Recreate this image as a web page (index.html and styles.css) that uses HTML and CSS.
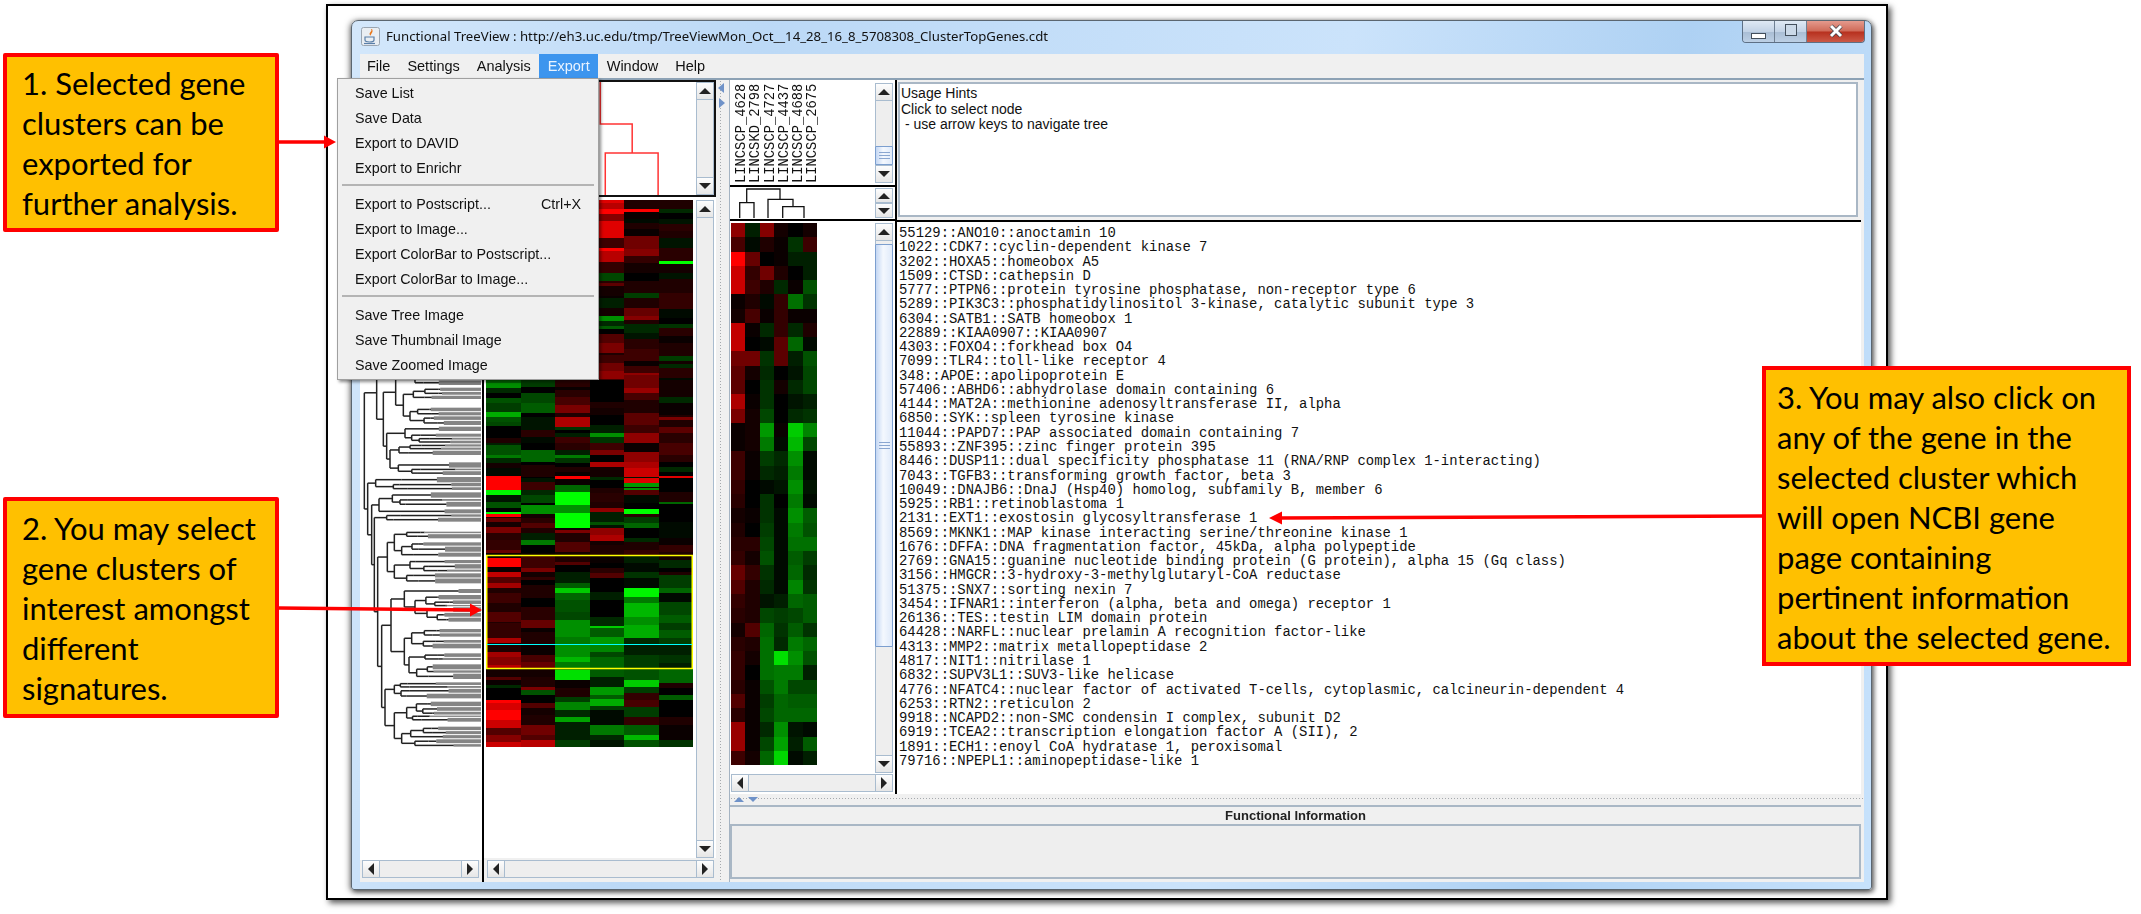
FILE: index.html
```html
<!DOCTYPE html>
<html lang="en">
<head>
<meta charset="utf-8">
<title>Functional TreeView</title>
<link rel="stylesheet" href="styles.css">
</head>
<body>
<div class="frame">
  <div class="window">
    <div class="titlebar">
      <svg class="java" viewBox="0 0 19 19"><rect x=".5" y=".5" width="18" height="18" rx="2" fill="#e9eef3" stroke="#9aa5b1"/><path d="M10 2c2 2-3 4-1 6 .5.6 1 .8 1 .8-1-2 3-3 1-6.800z" fill="#e8761a"/><path d="M4 10h9v3c0 1.500-1.500 2-4.500 2S4 14.500 4 13z" fill="none" stroke="#5a7fa8" stroke-width="1.200"/><path d="M3 16.500h11" stroke="#5a7fa8" stroke-width="1.200"/></svg>
      <span class="title">Functional TreeView : http://eh3.uc.edu/tmp/TreeViewMon_Oct__14_28_16_8_5708308_ClusterTopGenes.cdt</span>
      <div class="controls">
        <div class="ctl"><span class="min-ico"></span></div>
        <div class="ctl"><span class="max-ico"></span></div>
        <div class="ctl close"><svg viewBox="0 0 14 14" class="x-ico"><path d="M2 2l10 10M12 2L2 12" stroke="#39404a" stroke-width="4.400"/><path d="M2 2l10 10M12 2L2 12" stroke="#fff" stroke-width="3"/></svg></div>
      </div>
    </div>
    <div class="client">
      <div class="menubar">
        <span class="mi">File</span><span class="mi">Settings</span><span class="mi">Analysis</span><span class="mi active">Export</span><span class="mi">Window</span><span class="mi">Help</span>
        <div class="popup">
          <div class="pi">Save List</div>
          <div class="pi">Save Data</div>
          <div class="pi">Export to DAVID</div>
          <div class="pi">Export to Enrichr</div>
          <div class="psep"></div>
          <div class="pi">Export to Postscript...<span class="short">Ctrl+X</span></div>
          <div class="pi">Export to Image...</div>
          <div class="pi">Export ColorBar to Postscript...</div>
          <div class="pi">Export ColorBar to Image...</div>
          <div class="psep"></div>
          <div class="pi">Save Tree Image</div>
          <div class="pi">Save Thumbnail Image</div>
          <div class="pi">Save Zoomed Image</div>
        </div>
      </div>
      <div class="panes">
        <div class="left">
          <div class="thumb">
            <svg class="thumb-tree" viewBox="360 82 337 113" preserveAspectRatio="none"><path d="M601 82V124H633V153M606 195V153H659V195" fill="none" stroke="#f33" stroke-width="1.500"/></svg>
            <div class="vsb thumb-sb">
              <div class="sbtn"><i class="tri up"></i></div><div class="track"></div><div class="sbtn"><i class="tri down"></i></div>
            </div>
          </div>
          <div class="lower">
            <div class="tree-col">
              <canvas id="tree" class="tree-canvas" width="122" height="663"></canvas>
              <div class="hsb tree-hsb"><div class="sbtn"><i class="tri left-t"></i></div><div class="htrack"></div><div class="sbtn"><i class="tri right-t"></i></div></div>
            </div>
            <div class="heat-col">
              <div class="heat-row">
                <div class="heat-wrap"><canvas id="heat" width="207" height="547"></canvas></div>
                <div class="vsb heat-sb"><div class="sbtn"><i class="tri up"></i></div><div class="track"></div><div class="sbtn"><i class="tri down"></i></div></div>
              </div>
              <div class="hsb heat-hsb"><div class="sbtn"><i class="tri left-t"></i></div><div class="htrack"></div><div class="sbtn"><i class="tri right-t"></i></div></div>
            </div>
          </div>
        </div>
        <div class="vsplit"><i class="tri sp-l"></i><i class="tri sp-r"></i></div>
        <div class="right">
          <div class="upper">
            <div class="sub-left">
              <div class="label-row">
                <div class="labels">
                  <span class="lab">LINCSCP_4628</span><span class="lab">LINCSKD_2798</span><span class="lab">LINCSCP_4727</span><span class="lab">LINCSCP_4437</span><span class="lab">LINCSCP_4688</span><span class="lab">LINCSCP_2675</span>
                </div>
                <div class="vsb label-sb"><div class="sbtn"><i class="tri up"></i></div><div class="track"><div class="fill"></div><div class="bthumb small"><i class="grip"></i></div></div><div class="sbtn"><i class="tri down"></i></div></div>
              </div>
              <div class="mini-row">
                <svg class="mini-tree" viewBox="0 0 143 30"><path d="M8.700 30V14.700H23V30M15.700 14.700V1H49V11.300M37 30V11.300H62V18.700M51.700 30V18.700H73V30" fill="none" stroke="#111" stroke-width="1.300"/></svg>
                <div class="vsb mini-sb"><div class="sbtn short-btn"><i class="tri up"></i></div><div class="sbtn short-btn"><i class="tri down"></i></div></div>
              </div>
              <div class="small-row">
                <div class="small-top">
                  <div class="small-wrap"><canvas id="small" width="86" height="542"></canvas></div>
                  <div class="vsb small-sb"><div class="sbtn"><i class="tri up"></i></div><div class="track"><div class="bthumb long"><i class="grip"></i></div><div class="fill"></div></div><div class="sbtn"><i class="tri down"></i></div></div>
                </div>
                <div class="hsb small-hsb"><div class="sbtn"><i class="tri left-t"></i></div><div class="htrack"></div><div class="sbtn"><i class="tri right-t"></i></div></div>
              </div>
            </div>
            <div class="bar"></div>
            <div class="sub-right">
              <div class="usage">Usage Hints<br>Click to select node<br>&nbsp;- use arrow keys to navigate tree</div>
              <div class="hbar"></div>
              <div class="genes">55129::ANO10::anoctamin 10
1022::CDK7::cyclin-dependent kinase 7
3202::HOXA5::homeobox A5
1509::CTSD::cathepsin D
5777::PTPN6::protein tyrosine phosphatase, non-receptor type 6
5289::PIK3C3::phosphatidylinositol 3-kinase, catalytic subunit type 3
6304::SATB1::SATB homeobox 1
22889::KIAA0907::KIAA0907
4303::FOXO4::forkhead box O4
7099::TLR4::toll-like receptor 4
348::APOE::apolipoprotein E
57406::ABHD6::abhydrolase domain containing 6
4144::MAT2A::methionine adenosyltransferase II, alpha
6850::SYK::spleen tyrosine kinase
11044::PAPD7::PAP associated domain containing 7
55893::ZNF395::zinc finger protein 395
8446::DUSP11::dual specificity phosphatase 11 (RNA/RNP complex 1-interacting)
7043::TGFB3::transforming growth factor, beta 3
10049::DNAJB6::DnaJ (Hsp40) homolog, subfamily B, member 6
5925::RB1::retinoblastoma 1
2131::EXT1::exostosin glycosyltransferase 1
8569::MKNK1::MAP kinase interacting serine/threonine kinase 1
1676::DFFA::DNA fragmentation factor, 45kDa, alpha polypeptide
2769::GNA15::guanine nucleotide binding protein (G protein), alpha 15 (Gq class)
3156::HMGCR::3-hydroxy-3-methylglutaryl-CoA reductase
51375::SNX7::sorting nexin 7
3454::IFNAR1::interferon (alpha, beta and omega) receptor 1
26136::TES::testin LIM domain protein
64428::NARFL::nuclear prelamin A recognition factor-like
4313::MMP2::matrix metallopeptidase 2
4817::NIT1::nitrilase 1
6832::SUPV3L1::SUV3-like helicase
4776::NFATC4::nuclear factor of activated T-cells, cytoplasmic, calcineurin-dependent 4
6253::RTN2::reticulon 2
9918::NCAPD2::non-SMC condensin I complex, subunit D2
6919::TCEA2::transcription elongation factor A (SII), 2
1891::ECH1::enoyl CoA hydratase 1, peroxisomal
79716::NPEPL1::aminopeptidase-like 1</div>
            </div>
          </div>
          <div class="hsplit"><i class="tri sp-u"></i><i class="tri sp-d"></i></div>
          <div class="fi-head">Functional Information</div>
          <div class="fi-body"></div>
        </div>
      </div>
    </div>
  </div>
</div>

<svg class="arrows" viewBox="0 0 2141 914">
  <path d="M279 142H326M279 608L472 610M1762 516L1280 518" stroke="#f00" stroke-width="3.500" fill="none"/>
  <path d="M336 142L324 135.500V148.500zM482 610L470 603.500V616.500zM1269 518L1282 511.500V524.500z" fill="#f00"/>
</svg>
<div class="callout c1">1. Selected gene<br>clusters can be<br>exported for<br>further analysis.</div>
<div class="callout c2">2. You may select<br>gene clusters of<br>interest amongst<br>different<br>signatures.</div>
<div class="callout c3">3. You may also click on<br>any of the gene in the<br>selected cluster which<br>will open NCBI gene<br>page containing<br>pertinent information<br>about the selected gene.</div>
<script src="script.js"></script>
</body>
</html>
```
FILE: styles.css
```css
* { box-sizing: border-box; }
html, body { margin: 0; padding: 0; background: #fff; }
body { width: 2141px; height: 914px; overflow: hidden; position: relative; }

.frame {
  margin: 4px 0 0 326px;
  width: 1562px;
  height: 896px;
  border: 2px solid #000;
  background: #fff;
  padding: 14px 14px 8px 23px;
  box-shadow: 3px 3px 6px rgba(0,0,0,.65);
}
.window {
  width: 1521px;
  height: 870px;
  border: 1px solid #5b6670;
  border-radius: 7px 7px 3px 3px;
  padding: 0 7px 7px 8px;
  background: linear-gradient(100deg, #d3e7fb 0%, #bcd9f6 25%, #cbe3fb 60%, #aed1f3 80%, #c7e2fc 100%);
  box-shadow: -1px 1px 6px rgba(0,0,0,.55), 2px 2px 5px rgba(0,0,0,.5);
  display: flex;
  flex-direction: column;
  filter: blur(.35px);
}

.titlebar { height: 33px; display: flex; align-items: center; position: relative; }
.java { width: 19px; height: 19px; margin-left: 1px; margin-top: -2px; flex: none; }
.title { font: 13.200px "Noto Sans", sans-serif; color: #111; margin-left: 6px; margin-top: -3px; white-space: nowrap; }
.controls { position: absolute; top: 0; right: -1px; display: flex; height: 22px; border: 1px solid #5e7085; border-top: 0; border-radius: 0 0 4px 4px; overflow: hidden; }
.ctl { width: 32px; display: flex; align-items: center; justify-content: center; background: linear-gradient(#dfe9f4, #c3d3e6 50%, #a9bdd4 52%, #bdd0e5); border-right: 1px solid #6f8093; }
.ctl.close { width: 57px; border-right: 0; background: linear-gradient(#e49a8d, #cf6a58 48%, #b7301e 52%, #cb5947); }
.min-ico { width: 15px; height: 6px; background: #fff; border: 1px solid #434f5c; margin-top: 8px; }
.max-ico { width: 12px; height: 12px; background: #cbd9e8; border: 1px solid #434f5c; margin-top: -3px; }
.x-ico { width: 14px; height: 14px; margin-top: -2px; }

.client { flex: 1; background: #f0f0f0; display: flex; flex-direction: column; min-height: 0; }
.menubar { height: 26px; border-bottom: 2px solid #8da2b5; display: flex; align-items: stretch; position: relative; flex: none; }
.mi { font: 14.500px/17px "Liberation Sans", sans-serif; color: #111; padding: 4px 8.500px 0; height: 24px; }
.mi.active { background: #3d95ee; color: #e9f3ff; }
.mi:first-child { margin-left: -1.500px; }

.popup {
  position: absolute; left: -23px; top: 24px; width: 262px; height: 302px;
  background: #f0f0f0; border: 1px solid #a0a0a0; box-shadow: 2px 2px 3px rgba(0,0,0,.45);
  padding-top: 2px; z-index: 5;
}
.pi { height: 25px; padding-left: 17px; font: 14.300px/25px "Liberation Sans", sans-serif; color: #111; position: relative; white-space: nowrap; }
.short { position: absolute; left: 203px; top: 0; }
.psep { height: 2px; margin: 3px 4px 6px; background: #b4b4b4; }

.panes { flex: 1; display: flex; min-height: 0; }
.left { width: 356px; display: flex; flex-direction: column; flex: none; }
.thumb { height: 117px; border-top: 2px solid #111; border-bottom: 2px solid #111; border-right: 2px solid #111; background: #fff; display: flex; flex: none; }
.thumb-tree { flex: 1; width: 337px; height: 113px; min-width: 0; }

.lower { flex: 1; display: flex; min-height: 0; }
.tree-col { width: 124px; border-right: 2px solid #000; display: flex; flex-direction: column; flex: none; }
.tree-canvas { display: block; width: 122px; height: 663px; background: #fff; flex: none; }
.tree-hsb { margin: 0 3px 0 2px; }
.heat-col { flex: 1; display: flex; flex-direction: column; min-width: 0; }
.heat-row { height: 661px; display: flex; background: #fff; flex: none; }
.heat-wrap { width: 212px; padding: 3px 0 0 2px; flex: none; }
.heat-wrap canvas { display: block; }
.heat-sb { margin: 3px 0 0 0; }
.heat-hsb { margin: 2px 2px 0 3px; }

.vsb { width: 18px; display: flex; flex-direction: column; flex: none; background: #eee; }
.sbtn { width: 18px; height: 18px; flex: none; display: flex; align-items: center; justify-content: center; background: linear-gradient(#fdfdfd, #e6e6e6); border: 1px solid #a9bccf; }
.short-btn { height: 15px; }
.track { flex: 1; display: flex; flex-direction: column; background: #eee; border-left: 1px solid #a9bccf; border-right: 1px solid #a9bccf; min-height: 0; }
.fill { flex: 1; }
.bthumb { flex: none; display: flex; align-items: center; justify-content: center; background: linear-gradient(90deg, #c4d7f3, #f4f8fe 45%, #dfeafa 100%); border: 1px solid #7c9fcf; margin: 0 -1px; border-radius: 1px; }
.bthumb.small { height: 19px; }
.bthumb.long { height: 403px; margin-top: 3px; }
.grip { display: block; width: 11px; height: 7px; border-top: 1px solid #8aa6d0; border-bottom: 1px solid #8aa6d0; background: linear-gradient(#8aa6d0,#8aa6d0) center/100% 1px no-repeat; }
.tri { display: block; width: 0; height: 0; }
.tri.up { border-left: 6px solid transparent; border-right: 6px solid transparent; border-bottom: 6px solid #222; }
.tri.down { border-left: 6px solid transparent; border-right: 6px solid transparent; border-top: 6px solid #222; }
.tri.left-t { border-top: 6px solid transparent; border-bottom: 6px solid transparent; border-right: 6px solid #222; }
.tri.right-t { border-top: 6px solid transparent; border-bottom: 6px solid transparent; border-left: 6px solid #222; }

.hsb { height: 18px; display: flex; flex: none; background: #eee; }
.htrack { flex: 1; background: #eee; border-top: 1px solid #a9bccf; border-bottom: 1px solid #a9bccf; }

.vsplit { width: 13px; flex: none; display: flex; flex-direction: column; align-items: center; gap: 5px; padding-top: 3px;
  background: radial-gradient(circle, #a5a9ad .8px, transparent 1px) 3px 0/3px 3px repeat-y; }
.tri.sp-l { border-top: 5px solid transparent; border-bottom: 5px solid transparent; border-right: 6px solid #6f92c8; margin-left: -3px; }
.tri.sp-r { border-top: 5px solid transparent; border-bottom: 5px solid transparent; border-left: 6px solid #6f92c8; margin-left: -1px; }

.right { flex: 1; display: flex; flex-direction: column; min-width: 0; border-left: 1px solid #a4b3c2; }
.upper { height: 714px; display: flex; flex: none; }
.sub-left { width: 165px; display: flex; flex-direction: column; flex: none; background: #fff; }
.bar { width: 2px; background: #000; flex: none; }
.sub-right { flex: 1; display: flex; flex-direction: column; min-width: 0; padding-right: 3px; }

.label-row { height: 107px; border-bottom: 2px solid #000; display: flex; padding: 3px 2px 2px 5px; flex: none; }
.labels { flex: 1; display: flex; align-items: flex-start; }
.lab { writing-mode: vertical-rl; transform: rotate(180deg); font: 13.800px/14.300px "Liberation Mono", monospace; color: #111; width: 14.300px; height: 100px; white-space: nowrap; text-align: left; flex: none; }
.mini-row { height: 34px; border-bottom: 2px solid #000; display: flex; padding: 1px 2px 1px 0; flex: none; }
.mini-tree { flex: 1; min-width: 0; height: 30px; }
.small-row { flex: 1; display: flex; flex-direction: column; min-height: 0; }
.small-top { height: 552px; display: flex; padding: 2px 2px 0 1px; flex: none; }
.small-wrap { flex: 1; }
.small-wrap canvas { display: block; }
.small-hsb { margin: 1px 2px 0 1px; }

.usage { height: 135px; margin: 2px 3px 3px 1px; border: 2px solid #a9b7c5; background: #fff; padding: 2px 1px; font: 14px/15.500px "Liberation Sans", sans-serif; color: #111; flex: none; }
.hbar { height: 2px; background: #000; flex: none; }
.genes { flex: 1; background: #fff; padding: 4px 0 0 2px; font: 13.900px/14.270px "Liberation Mono", monospace; color: #111; white-space: pre; overflow: hidden; }

.hsplit { height: 11px; flex: none; display: flex; align-items: center; gap: 4px; padding-left: 4px;
  background: radial-gradient(circle, #a5a9ad .8px, transparent 1px) 0 3px/3px 3px repeat-x; }
.tri.sp-u { border-left: 5px solid transparent; border-right: 5px solid transparent; border-bottom: 5px solid #6f92c8; }
.tri.sp-d { border-left: 5px solid transparent; border-right: 5px solid transparent; border-top: 5px solid #6f92c8; }
.fi-head { height: 19px; flex: none; border-top: 2px solid #a9b7c5; font: bold 13px/17px "Liberation Sans", sans-serif; color: #222; text-align: center; margin-right: 3px; }
.fi-body { flex: none; height: 55px; border: 2px solid #a9b7c5; margin-right: 3px; background: #eee; }

.arrows { position: absolute; left: 0; top: 0; width: 2141px; height: 914px; pointer-events: none; }
.callout {
  position: absolute;
  background: #ffc000;
  border: 4px solid #f00;
  border-radius: 2px;
  font: 31px/40px Lato, sans-serif;
  color: #000;
  white-space: nowrap;
}
.c1 { left: 3px; top: 53px; width: 276px; height: 179px; padding: 6px 0 0 15px; }
.c2 { left: 3px; top: 497px; width: 276px; height: 221px; padding: 7px 0 0 15px; }
.c3 { left: 1762px; top: 366px; width: 369px; height: 300px; padding: 7px 0 0 11px; border-radius: 0; }
```
FILE: script.js
```js
(function () {
  function color(v) {
    var c = Math.min(255, Math.round(Math.abs(v) * 10.2));
    return v >= 0 ? 'rgb(' + c + ',0,0)' : 'rgb(0,' + c + ',0)';
  }

  /* ---- main heat map: runs read per column as "offset:value", grouped by origin ---- */
  var columns = [
    [[375, '15:-10 25:-14 40:-4 55:0 68:-8 85:-6 110:-17 125:-8 140:-7 152:0 190:3 205:-3 210:-8 240:-12 250:-4 265:2 280:-1 303:25 345:-24 360:-2 380:-8 400:0 410:-25 418:25 425:3 430:10 440:2 455:12 475:4 495:5 525:10'],
     [540, '40:1 55:25 80:1 95:19 110:8 130:16 145:3 160:6 190:3 215:8 245:3 250:5 295:17 310:3 335:16 350:13 375:18 385:2 410:8 420:1 435:-4 445:0 480:25 490:21 510:25 540:20 565:8 585:13 605:20']],
    [[375, '15:-6 35:0 55:-7 85:-9 115:0 125:-2 165:4 185:-1 205:0 225:-10 262:0 270:3 305:0 310:-2 320:6 345:-4 360:-7 385:0 390:-14 418:2 430:4 445:8 460:3 475:-3 495:-12 510:0 535:1'],
     [540, '48:6 85:12 95:2 110:5 120:0 135:3 175:0 200:4 240:10 265:1 275:3 315:1 345:7 365:10 385:2 410:3 440:12 450:-8 465:0 490:8 505:2 525:3 555:11 585:8 600:18']],
    [[375, '15:4 35:1 45:4 65:7 90:12 115:3 125:17 155:-5 165:0 175:-3 185:6 205:4 225:-3 240:-12 250:-5 265:0 275:3 290:1 303:25 313:1 330:-10 352:-25 390:-14 415:-25 460:1 465:12 475:3 500:8 530:2'],
     [540, '48:3 65:8 75:0 95:-3 130:-9 145:-20 160:-10 180:-8 215:-7 240:-14 290:-12 315:-14 350:-18 365:-12 390:-22 420:1 445:3 470:-6 485:-13 510:-4 530:-16 545:-3 600:-6']],
    [[196, '12:22 20:18 38:25 55:13 75:22 125:6 155:25 165:18 198:5 232:-7 255:4 262:9 270:2 300:1 305:-3 335:2 360:-14 375:-4 390:-9 398:0 415:8 440:12 470:3 478:6 500:11 525:14 548:6'],
     [375, '15:0 80:3 100:2 120:0 150:-3 175:-14 185:-5 205:6 225:12 240:0 260:17 275:2 305:-4 315:0 340:3 355:4 380:3 400:14 410:-3 440:-8 450:-2 460:14 480:17 497:2 510:3 540:1'],
     [540, '48:1 70:0 85:4 100:8 115:0 155:-3 180:0 230:-4 258:-20 265:-9 290:-15 315:-13 335:-7 350:-10 385:-9 410:-3 440:-15 465:-9 478:-17 498:-6 510:-1 555:-12 585:-4 600:-2']],
    [[196, '12:3 38:25 48:1 70:-1 80:3 100:1 120:11 160:13 180:5 200:2 230:0 255:3 290:-6 305:3 335:10 360:13 372:3 385:-4 410:-2 430:4 460:6 495:1 510:6 530:14'],
     [375, '0:11 40:15 55:7 75:3 115:9 150:6 175:14 205:1 230:14 262:17 280:20 305:-2 310:22 325:-15 335:2 340:-14 346:8 360:-1 385:0 403:-25 418:4 425:-6 445:-10 460:0 490:-4 500:3 525:5 540:-1'],
     [540, '48:-3 70:-1 95:-5 115:-1 145:-24 170:-12 190:-18 230:-14 255:-17 295:-4 315:-3 345:-6 385:-8 420:-20 440:-6 460:5 480:7 500:-6 530:5 555:-9 585:-18 600:-8']],
    [[196, '12:3 40:-4 50:0 70:-2 85:4 105:3 125:-2 155:4 195:-25 205:2 232:-2 250:3 290:5 340:-1 365:0 385:-5 395:4 420:1 440:3 480:-6 495:2 505:-4 515:4 545:-1'],
     [375, '15:2 65:-4 85:1 120:3 125:12 135:3 155:9 175:4 205:7 240:4 260:0 275:-4 290:0 302:22 310:0 350:3 380:-10 388:0 440:-1 490:1 510:5 530:3 540:1'],
     [540, '48:2 60:-4 85:0 95:3 105:-6 145:-10 160:-1 185:-7 225:-9 250:-6 270:-9 295:-6 315:-3 345:-5 370:-3 385:-10 430:3 445:0 465:-9 480:0 530:3 555:1 600:-5']]
  ];

  var heat = document.getElementById('heat').getContext('2d');
  var TOP = 200, BOTTOM = 747, CW = 34.5;
  columns.forEach(function (groups, i) {
    var runs = [];
    groups.forEach(function (g) {
      g[1].split(' ').forEach(function (s) {
        var p = s.split(':');
        runs.push([g[0] + (+p[0]) / 3, +p[1]]);
      });
    });
    var x0 = Math.round(i * CW), x1 = Math.round((i + 1) * CW);
    heat.fillStyle = '#200000';
    heat.fillRect(x0, 0, x1 - x0, BOTTOM - TOP);
    runs.forEach(function (r, k) {
      var y0 = r[0], y1 = k + 1 < runs.length ? runs[k + 1][0] : BOTTOM;
      heat.fillStyle = color(r[1]);
      heat.fillRect(x0, Math.round(y0 - TOP), x1 - x0, Math.round(y1 - TOP) - Math.round(y0 - TOP));
    });
  });
  heat.strokeStyle = '#ffff00';
  heat.lineWidth = 1.5;
  heat.strokeRect(0.75, 555 - TOP + 0.5, 205.5, 113);
  heat.fillStyle = '#00ffff';
  heat.fillRect(1, 644 - TOP, 205, 1);

  /* ---- gene-level heat map: one row per gene ---- */
  var rows = [
    [14,-3,13,2,0,2],[7,-1,3,1,-5,6],[25,10,0,1,-3,-3],[20,5,11,3,0,-3],[20,6,3,-4,1,-8],[1,3,-1,5,-11,-5],
    [2,7,1,5,1,1],[19,1,-4,5,-4,3],[19,0,-1,9,-10,-1],[11,11,-5,9,-3,-8],[9,2,-4,0,-2,-7],[9,0,-5,2,-4,-7],
    [17,1,-5,0,-2,-3],[12,2,-7,0,-4,-5],[1,2,-15,1,-20,-13],[1,2,-12,-1,-18,-7],[6,1,-6,-4,-14,-1],[6,1,-4,-3,-12,-1],
    [5,0,-1,-2,-14,-2],[4,0,-5,0,-12,-1],[2,1,-5,-1,-14,-9],[3,0,-6,-1,-12,-8],[4,4,-7,-1,-11,-11],[5,2,-8,-1,-9,-6],
    [10,5,-5,-1,-10,-4],[8,3,-4,-1,-13,-5],[5,3,-2,-3,-10,-9],[4,3,-7,-6,-7,-9],[2,8,-10,-5,-9,-5],[4,3,-11,-4,-12,-10],
    [5,2,-11,-22,-14,-8],[5,0,-11,-12,-12,-3],[4,1,-8,-12,-7,-7],[8,1,-6,-10,-9,-9],[4,1,-7,-10,-10,-10],
    [15,1,-4,-14,-2,-1],[15,1,-7,-16,-3,-9],[6,2,-10,-21,-1,-3]
  ];
  var small = document.getElementById('small').getContext('2d');
  rows.forEach(function (row, r) {
    var y0 = Math.round(r * 14.27), y1 = Math.round((r + 1) * 14.27);
    row.forEach(function (v, c) {
      var x0 = Math.round(c * 14.33), x1 = Math.round((c + 1) * 14.33);
      small.fillStyle = color(v);
      small.fillRect(x0, y0, x1 - x0, y1 - y0);
    });
  });

  /* ---- gene dendrogram ---- */
  var t = document.getElementById('tree').getContext('2d');
  var seed = 7;
  function rnd() { seed = (seed * 16807) % 2147483647; return seed / 2147483647; }
  var X = function (z) { return z / 3 - 5; };
  var Y = function (z) { return z / 3 + 178; };
  function hl(a, b, y) { t.fillStyle = '#222'; t.fillRect(X(a), Y(y) - 0.75, X(b) - X(a), 1.5); }
  function vl(x, a, b) { t.fillStyle = '#222'; t.fillRect(X(x) - 0.75, Y(a), 1.5, Y(b) - Y(a)); }
  function gen(x, y0, y1) {
    if (y1 - y0 <= 16 || x > 300) {
      var sx = Math.max(x + rnd() * 12, 200 + rnd() * 100);
      hl(x, sx + 1, (y0 + y1) / 2);
      t.fillStyle = '#858585';
      t.fillRect(X(sx), Y(y0), X(378) - X(sx), Y(y1) - Y(y0));
      return (y0 + y1) / 2;
    }
    var m = y0 + (y1 - y0) * (0.3 + rnd() * 0.4);
    var ax = x + 14 + rnd() * 30, bx = x + 14 + rnd() * 30;
    var a = gen(ax, y0, m - 1.5), b = gen(bx, m + 1.5, y1);
    vl(x, a, b); hl(x, ax, a); hl(x, bx, b);
    return (a + b) / 2;
  }
  function R(x, y0, y1) { return { r: 1, x: x, y0: y0, y1: y1 }; }
  function N(x) { return { x: x, k: Array.prototype.slice.call(arguments, 1) }; }
  function draw(n) {
    if (n.r) return gen(n.x, n.y0, n.y1);
    var cs = n.k.map(draw);
    var lo = Math.min.apply(null, cs), hi = Math.max.apply(null, cs);
    vl(n.x, lo, hi);
    n.k.forEach(function (k, i) { hl(n.x, k.x, cs[i]); });
    return (lo + hi) / 2;
  }
  var up1 = N(122, R(180, -10, 30), N(145, R(175, 38, 72), R(165, 98, 150)));
  var up2 = N(95, N(150, R(228, 155, 168), R(170, 176, 205)), N(105, R(132, 208, 240), R(130, 262, 300)));
  var B = N(62, R(140, 306, 322), R(115, 324, 345));
  var C = N(72, N(112, R(135, 352, 368), R(135, 372, 395)), R(90, 403, 415));
  var E = N(97, N(118, R(155, 470, 490), R(140, 502, 545)), N(118, R(165, 555, 590), R(155, 595, 625)));
  var F = N(108, N(148, R(300, 642, 654), R(180, 660, 740)),
               N(148, N(170, R(208, 762, 785), R(205, 795, 820)), N(162, R(210, 835, 855), R(185, 868, 912))));
  var G = N(90, R(118, 922, 970), N(118, R(155, 980, 1040), R(140, 1055, 1115)));
  var root = N(28, N(65, R(95, -40, -5), N(85, up1, up2)),
                   N(38, B, N(50, C, N(58, R(95, 418, 440), N(68, E, N(80, F, G))))));
  draw(root);
})();
```
